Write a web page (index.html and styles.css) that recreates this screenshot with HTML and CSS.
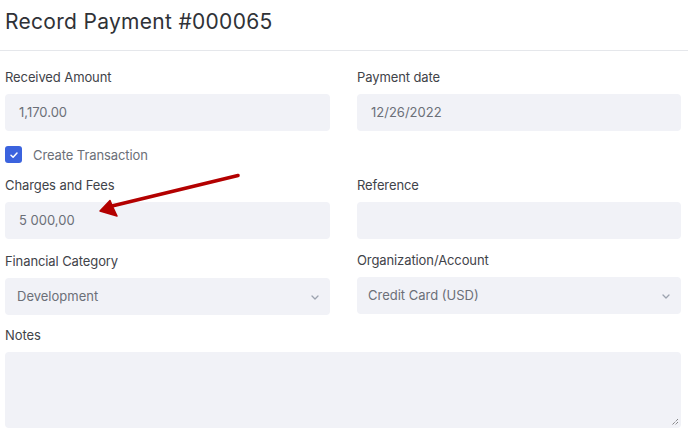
FILE: index.html
```html
<!DOCTYPE html>
<html lang="en">
<head>
<meta charset="utf-8">
<title>Record Payment</title>
<link rel="stylesheet" href="styles.css">
</head>
<body>
<div class="page">
  <header class="header">
    <h1 class="title">Record Payment #000065</h1>
  </header>
  <form class="form">
    <div class="grid">
      <div class="field">
        <label class="label">Received Amount</label>
        <div class="input">1,170.00</div>
      </div>
      <div class="field">
        <label class="label">Payment date</label>
        <div class="input">12/26/2022</div>
      </div>
      <div class="check-row">
        <span class="checkbox">
          <svg width="10" height="10" viewBox="0 0 10 10"><path d="M2 5.2 L4.1 7.2 L8 3" fill="none" stroke="#fff" stroke-width="1.5" stroke-linecap="round" stroke-linejoin="round"/></svg>
        </span>
        <span class="check-label">Create Transaction</span>
      </div>
      <div class="field">
        <label class="label">Charges and Fees</label>
        <div class="input">5 000,00</div>
      </div>
      <div class="field">
        <label class="label">Reference</label>
        <div class="input"></div>
      </div>
      <div class="field field-sel">
        <label class="label">Financial Category</label>
        <div class="input select">Development
          <svg class="chev" width="8" height="5" viewBox="0 0 8 5"><path d="M1 1 L4 4 L7 1" fill="none" stroke="#9ca3af" stroke-width="1.3" stroke-linecap="round" stroke-linejoin="round"/></svg>
        </div>
      </div>
      <div class="field field-sel field-up">
        <label class="label">Organization/Account</label>
        <div class="input select">Credit Card (USD)
          <svg class="chev" width="8" height="5" viewBox="0 0 8 5"><path d="M1 1 L4 4 L7 1" fill="none" stroke="#9ca3af" stroke-width="1.3" stroke-linecap="round" stroke-linejoin="round"/></svg>
        </div>
      </div>
      <div class="field notes">
        <label class="label">Notes</label>
        <div class="textarea">
          <svg class="grip" width="8" height="8" viewBox="0 0 8 8"><path d="M7 1 L1 7 M7 4 L4 7" stroke="#555" stroke-width="1" stroke-dasharray="1 1"/></svg>
        </div>
      </div>
    </div>
  </form>
  <svg class="arrow" width="688" height="439" viewBox="0 0 688 439">
    <path d="M238 175.5 L112 206" stroke="#b30000" stroke-width="3.6" stroke-linecap="round"/>
    <path d="M100 211 L110 200.5 L112.5 206.5 L117 216 Z" fill="#b30000" stroke="#b30000" stroke-width="1.5" stroke-linejoin="round"/>
  </svg>
</div>
</body>
</html>
```
FILE: styles.css
```css
html, body {
  margin: 0;
  padding: 0;
  background: #ffffff;
}
body {
  font-family: Inter, "Noto Sans", sans-serif;
  color: #374151;
  width: 688px;
  height: 439px;
  overflow: hidden;
}
.page {
  position: relative;
  width: 688px;
  height: 439px;
}
.header {
  height: 51px;
  border-bottom: 1px solid #e5e7eb;
  box-sizing: border-box;
  padding: 9px 5px 0;
}
.title {
  margin: 0;
  font-size: 21px;
  font-weight: 400;
  line-height: 26px;
  color: #2f3237;
  letter-spacing: 0.3px;
}
.form {
  padding: 18px 7px 0 5px;
}
.grid {
  display: grid;
  grid-template-columns: 325px 324px;
  column-gap: 27px;
}
.field {
  display: flex;
  flex-direction: column;
}
.label {
  font-size: 13px;
  line-height: 17px;
  color: #3f4349;
  margin-bottom: 8px;
  letter-spacing: -0.1px;
}
.input {
  height: 37px;
  box-sizing: border-box;
  background: #f1f2f7;
  border-radius: 4px;
  padding: 0 14px;
  font-size: 13px;
  line-height: 37px;
  color: #6b6f78;
}
.check-row {
  grid-column: 1 / 3;
  display: flex;
  align-items: center;
  gap: 11px;
  margin-top: 15px;
  margin-bottom: 14px;
  height: 17px;
}
.checkbox {
  width: 17px;
  height: 17px;
  border-radius: 3px;
  background: #3b63de;
  display: flex;
  align-items: center;
  justify-content: center;
}
.check-label {
  font-size: 13px;
  color: #6b6f78;
  letter-spacing: -0.1px;
}
.field-sel {
  margin-top: 14px;
}
.field-up {
  margin-top: 13px;
}
.select {
  position: relative;
  padding-left: 12px;
}
.field-up .select {
  padding-left: 11px;
}
.chev {
  position: absolute;
  right: 11px;
  top: 17px;
}
.notes {
  grid-column: 1 / 3;
  margin-top: 12px;
}
.textarea {
  position: relative;
  height: 76px;
  background: #f1f2f7;
  border-radius: 4px;
}
.grip {
  position: absolute;
  right: 2px;
  bottom: 2px;
}
.arrow {
  position: absolute;
  left: 0;
  top: 0;
  pointer-events: none;
}
```
